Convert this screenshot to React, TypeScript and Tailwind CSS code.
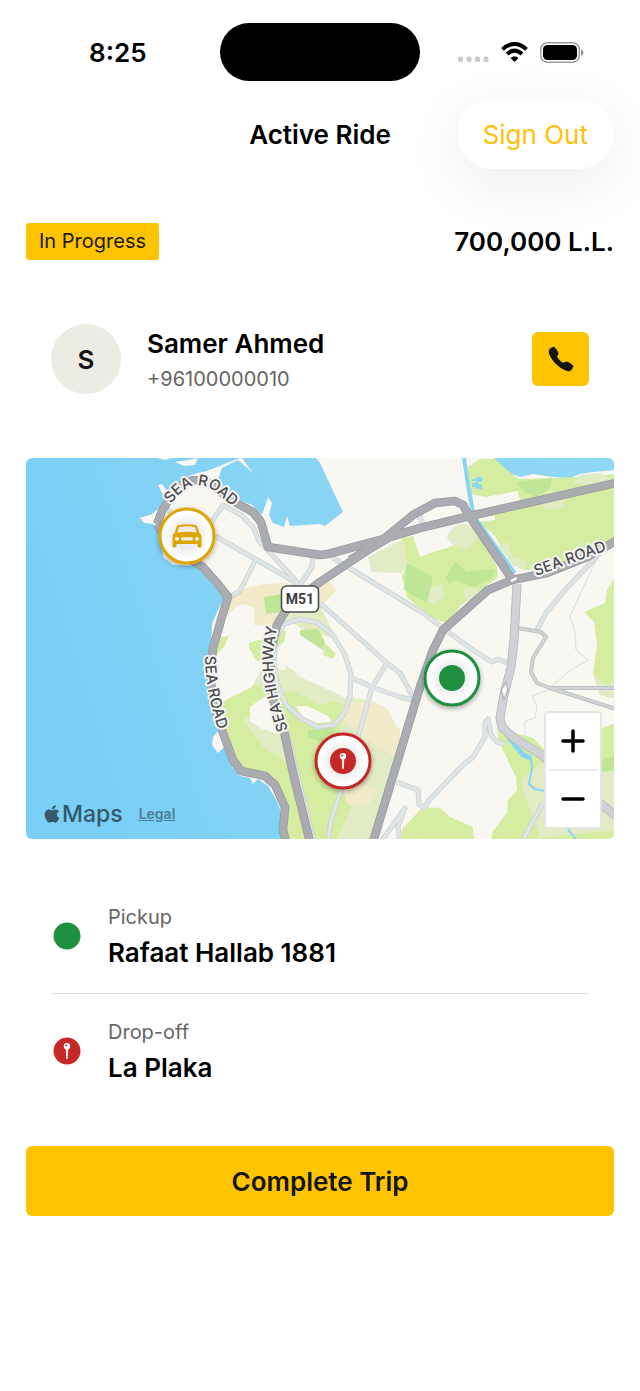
import { ReactNode } from 'react'
import { FaApple } from 'react-icons/fa'
import { IoCall } from 'react-icons/io5'

type MarkerProps = {
  x: number
  y: number
  color: string
  children: ReactNode
}

type StopProps = {
  label: string
  place: string
  icon: ReactNode
}

const majorRoads = [
  'M157 524 L162 511 L171 496 L182 485 L193 480 L206 481 L233 501 L253 512 L261 522 L268 547 L320 555 L328 554 L380 540 L420 528 L470 516 L616 483',
  'M157 524 L172 549 L203 567 L217 583 L228 597 L221 620 L213 648 L210 673 L213 703 L223 733 L233 760 L241 771 L265 776 L275 785 L285 807 L283 830 L286 842',
  'M470 517 L463 505 L455 501 L435 503 L413 515 L380 542 L320 582 L288 607 L277 625 L270 655 L273 700 L283 727 L293 773 L310 842',
  'M350 560 L390 537 L420 528',
  'M468 514 L512 579',
  'M616 541 L587 557 L547 573 L512 580 L488 590 L443 630 L433 650 L420 687 L373 842',
]

const minorRoads = [
  'M167 509 L187 526 L217 537 L257 560 L297 583',
  'M255 561 L240 591 L230 597',
  'M210 524 L223 505 L241 515 L253 527 L259 541 L297 582 L300 596',
  'M313 556 L312 567 L300 585',
  'M333 558 L423 613 L470 648 L492 662 L498 659 L507 663',
  'M320 603 L387 663 L400 673 L413 697',
  'M387 663 L372 687 L363 720 L343 785 L331 820 L328 842',
  'M352 678 L372 687 L400 697 L413 700',
  'M274 660 L276 638 L284 624 L300 619 L318 623 L333 635 L345 655 L351 675 L350 697 L344 714 L334 725 L318 727 L302 719 L286 705 L277 683 Z',
  'M286 728 L300 785 L314 842',
  'M418 515 L424 525',
  'M397 782 L418 790 L419 804 L424 808 L430 799 L463 765 L473 757 L485 737 L485 723 L488 719 L491 735 L497 742 L505 744',
  'M381 842 L405 808 L398 827 L400 842',
  'M543 803 L522 842',
  'M600 553 L565 590 L546 613 L537 630',
]

const lanes = [
  'M518 628 L541 632 L546 637 L533 658 L531 672 L537 683 L550 688 L616 688',
  'M550 688 L616 709',
]

const paleRoads = ['M517 584 L514 640 L511 667 L504 695 L500 718 L502 727 L514 738 L542 755 L560 772 L616 816']

const hairlines = [
  'M598 556 L570 616 L575 632 L576 650 L588 660 L568 672 L550 688',
  'M548 690 L532 696 L537 706 L535 718 L525 721 L525 738',
]

function RoadMap() {
  return (
    <svg viewBox="26 458 588 381" className="block w-full" role="img" aria-label="Map of the trip">
      <defs>
        <linearGradient id="sea" x1="0" x2="1" y1="0.3" y2="0.1">
          <stop offset="0" stopColor="#79cff5" />
          <stop offset="0.45" stopColor="#88d4f4" />
          <stop offset="1" stopColor="#8fd8f5" />
        </linearGradient>
        <radialGradient id="disc">
          <stop offset="0.45" stopColor="#ececec" />
          <stop offset="0.85" stopColor="#ffffff" />
        </radialGradient>
        <filter id="drop" x="-30%" y="-30%" width="160%" height="160%">
          <feDropShadow dx="0" dy="2" stdDeviation="2.5" floodOpacity="0.35" />
        </filter>
        <path id="label-north" d="M171 504 Q180 491 192 486 Q206 483 218 494 L242 514" />
        <path id="label-east" d="M536 576 L616 547" />
        <path id="label-west" d="M205 656 Q205 690 219 732 L228 756" />
        <path id="label-highway" d="M288 730 Q270 680 274 645 L281 606" />
      </defs>

      <rect x="26" y="458" width="588" height="381" fill="url(#sea)" />

      {/* land */}
      <path
        fill="#f8f7f2"
        d="M240 458 L227 463 L207 471 L190 475 L183 482 L173 490 L167 491 L162 484 L158 485 L162 493 L166 498 L159 508 L152 514 L140 518 L144 523 L153 524 L162 537 L163 557 L173 565 L197 566 L213 585 L224 598 L217 612 L212 624 L211 645 L207 660 L205 677 L212 703 L220 729 L213 737 L212 745 L218 753 L224 747 L233 768 L240 776 L250 778 L253 784 L258 779 L268 786 L278 803 L282 817 L280 830 L282 840 L616 840 L616 470 L593 472 L580 474 L570 478 L553 477 L533 474 L520 477 L510 473 L500 467 L494 458 L316 458 L320 463 L343 512 L325 526 L320 524 L290 526 L287 516 L284 527 L273 523 L269 515 L272 503 L268 497 L262 515 L252 505 L233 497 L217 483 L222 468 L238 460 L253 473 L242 458 Z"
      />
      <path fill="#f8f7f2" d="M175 462 L188 460 L198 458 L195 465 L184 466 Z M157 458 L172 458 L165 460 Z" />

      {/* parks, north-east */}
      <g fill="#d4eda1">
        <path d="M468 467 L480 459 L495 459 L507 470 L519 479 L553 478 L580 477 L616 474 L616 545 L567 564 L525 570 L513 565 L494 535 L478 522 L495 520 L495 516 L480 516 L476 510 L520 501 L518 491 L485 497 L472 494 L466 480 Z" />
        <path d="M402 538 L413 536 L420 557 L430 553 L450 547 L463 540 L480 532 L497 567 L498 577 L460 606 L448 624 L430 617 L407 597 L402 577 L407 563 Z" />
        <path d="M616 575 L607 590 L605 603 L584 612 L594 622 L597 645 L593 673 L600 690 L616 699 Z" />
        <path d="M400 840 L402 829 L423 807 L440 808 L450 817 L473 827 L474 840 Z" />
        <path d="M491 840 L493 831 L507 813 L508 800 L517 790 L516 777 L499 742 L497 728 L533 738 L545 750 L616 723 L616 840 Z" />
      </g>
      <g fill="#e1ebc4">
        <path d="M368 557 L402 540 L407 563 L402 573 L372 572 Z" />
        <path d="M447 538 Q452 524 463 524 L476 526 L478 538 L468 549 L455 547 Z" />
        <path d="M430 587 L443 583 L444 597 L434 604 L428 602 Z M463 588 L478 588 L477 600 L466 602 Z" />
        <path d="M572 484 L580 475 L600 473 L614 480 L612 484 Z M540 500 L550 490 L566 498 L562 508 L545 510 Z" />
        <path d="M498 545 L508 542 L512 556 L528 562 L524 570 L513 566 Z" />
        <path d="M593 674 L604 684 L616 683 L616 699 L600 695 Z M520 780 L545 760 L616 760 L616 830 L540 838 Z" />
      </g>
      <g fill="#bfe596">
        <path d="M407 563 L433 577 L427 603 L404 590 Z" />
        <path d="M455 562 L467 572 L495 569 L492 578 L474 587 L455 580 L449 584 L446 577 Z" />
        <path d="M517 482 L552 478 L550 488 L535 497 L522 490 Z M602 760 L616 755 L616 770 L602 772 Z" />
      </g>

      {/* dunes and gardens around the fairground */}
      <path
        fill="#f2ebc9"
        d="M230 597 L240 590 L250 587 L265 584 L283 583 L310 585 L330 582 L337 590 L325 602 L290 625 L280 627 L254 625 L254 608 L245 604 L237 606 L227 616 Z"
      />
      <path fill="#e1ebc4" d="M252 687 L262 668 L290 670 L320 690 L352 697 L373 702 L400 730 L397 765 L385 800 L372 842 L335 842 L340 790 L286 745 Z" />
      <path
        fill="#d4eda1"
        d="M216 650 L221 637 L229 636 L224 647 L216 655 Z M249 643 L258 640 L268 640 L268 655 L258 662 L249 652 Z M276 630 L286 631 L284 642 L276 648 Z"
      />
      <path
        fill="#d4eda1"
        d="M220 703 L242 692 L256 685 L275 690 L300 693 L318 705 L338 700 L345 712 L338 735 L325 760 L342 790 L352 806 L335 842 L282 842 L285 815 L277 790 L262 777 L240 770 L222 733 L214 708 Z"
      />
      <path fill="#e1ebc4" d="M243 720 L248 717 L280 734 L288 762 L264 748 Z" />
      <path fill="#e1ebc4" d="M280 612 L300 603 L318 600 L327 620 L337 640 L300 628 Z M284 665 L320 685 L350 697 L348 706 L300 695 Z" />
      <path fill="#bfe596" d="M264 597 L282 594 L281 612 L266 614 Z M308 730 L335 727 L334 738 L320 742 L308 737 Z" />
      <path fill="#f2ebc9" d="M340 716 L352 702 L373 702 L387 708 L400 733 L397 760 L385 750 L365 740 Z M343 790 L350 780 L377 789 L370 803 L360 808 L348 805 Z" />
      <g fill="#f8f7f2">
        <path d="M222 653 L234 644 L248 646 L260 667 L251 685 L238 692 L220 703 L216 680 Z" />
        <path d="M250 707 L262 698 L268 696 L281 728 L280 734 L262 729 L250 721 Z" />
        <path d="M281 645 L290 635 L300 634 L314 646 L326 656 L340 660 L348 680 L346 698 L320 686 L298 676 L286 662 Z" />
        <path d="M296 706 L308 706 L328 716 L332 722 L316 723 L302 716 Z" />
      </g>
      <path fill="#bfe596" d="M300 630 L318 629 L325 642 L323 650 L314 644 L300 635 Z" />
      <path fill="#d4eda1" d="M324 642 L336 654 L333 659 L323 655 Z" />
      <path fill="#d4eda1" d="M320 707 L330 702 L344 704 L342 714 L334 717 Z" />

      {/* streams */}
      <g fill="none" stroke="#86d5f5">
        <path d="M464 458 L468 485 L473 512" strokeWidth="4" />
        <path d="M476 518 L515 573" strokeWidth="3" />
        <path d="M499 708 L497 722 L508 738 L520 752" strokeWidth="2" />
        <path d="M508 739 L516 746" strokeWidth="3" />
        <path d="M514 744 L523 755 L531 758" strokeWidth="5" />
        <path d="M531 758 L532 768 L529 784 L535 789 L545 791 M567 828 L578 842" strokeWidth="2" />
      </g>
      <path fill="#8fd8f5" d="M472 479 h4 v-2 h6 v5 h-4 v2 h4 v5 h-6 v-2 h-4 v-4 h4 v-2 h-4 Z" />

      <g fill="none" strokeLinejoin="round">
        {hairlines.map((d) => (
          <path key={d} d={d} stroke="#dcdcdc" strokeWidth="1" />
        ))}
        {minorRoads.map((d) => (
          <path key={d} d={d} stroke="#c9d0d0" strokeWidth="5" />
        ))}
        {minorRoads.map((d) => (
          <path key={d} d={d} stroke="#dfe5e6" strokeWidth="3.6" />
        ))}
        {lanes.map((d) => (
          <path key={d} d={d} stroke="#b9bdbf" strokeWidth="4" />
        ))}
        {lanes.map((d) => (
          <path key={d} d={d} stroke="#d0d4d6" strokeWidth="2.4" />
        ))}
        {paleRoads.map((d) => (
          <path key={d} d={d} stroke="#b5b6bb" strokeWidth="9" />
        ))}
        {paleRoads.map((d) => (
          <path key={d} d={d} stroke="#d1d2d7" strokeWidth="7.4" />
        ))}
        <path d="M506 682 L501 690 L504 700 L508 690 Z" fill="#f8f7f2" stroke="#b5b6bb" strokeWidth="1.5" />
        {majorRoads.map((d) => (
          <path key={d} d={d} stroke="#989a9f" strokeWidth="8.6" />
        ))}
        {majorRoads.map((d) => (
          <path key={d} d={d} stroke="#abacb1" strokeWidth="7" />
        ))}
        <path d="M511 581 L517 578" stroke="#ffffff" strokeWidth="2" />
      </g>

      <g
        fill="#4b4c50"
        stroke="#f4f4f2"
        strokeWidth="4"
        strokeLinejoin="round"
        paintOrder="stroke"
        className="font-[Inter] text-[15px] font-medium">
        <text>
          <textPath href="#label-north">SEA ROAD</textPath>
        </text>
        <text>
          <textPath href="#label-east">SEA ROAD</textPath>
        </text>
        <text>
          <textPath href="#label-west">SEA ROAD</textPath>
        </text>
        <text>
          <textPath href="#label-highway">SEA HIGHWAY</textPath>
        </text>
      </g>

      <rect x="281.500" y="586" width="37" height="26" rx="5" fill="#fff" stroke="#4b4c50" strokeWidth="1.6" />
      <text x="300" y="604" textAnchor="middle" fill="#3c3d40" className="font-[Roboto] text-[14px] font-bold">
        M51
      </text>

      <Marker x={187} y={536} color="#dfa500">
        <path
          fill="#dfa500"
          fillRule="evenodd"
          d="M-8.500 -11 Q0 -12.500 8.500 -11 Q9.800 -10.800 10.300 -9.500 L12.300 -3.200 Q14.500 -1.500 14.500 1.500 V10 Q14.500 11.500 13 11.500 H12 Q10.500 11.500 10.500 10 V8 H-10.500 V10 Q-10.500 11.500 -12 11.500 H-13 Q-14.500 11.500 -14.500 10 V1.500 Q-14.500 -1.500 -12.300 -3.200 L-10.300 -9.500 Q-9.800 -10.800 -8.500 -11 Z M-8 -9 L-9.800 -3.500 Q0 -4.800 9.800 -3.500 L8 -9 Q0 -10.500 -8 -9 Z M-4.500 1.200 A1.500 1.500 0 0 0 -4.500 4.400 H4.500 A1.500 1.500 0 0 0 4.500 1.200 Z"
        />
        <circle cx="-10" cy="2.800" r="1.900" fill="#fff" />
        <circle cx="10" cy="2.800" r="1.900" fill="#fff" />
      </Marker>
      <Marker x={452} y={678} color="#1f8f40">
        <circle r="13" fill="#1f8f40" />
      </Marker>
      <Marker x={343} y={761} color="#c62828">
        <circle r="13" fill="#c62828" />
        <PinGlyph />
      </Marker>
    </svg>
  )
}

function Marker({ x, y, color, children }: MarkerProps) {
  return (
    <g transform={`translate(${x} ${y})`}>
      <circle r="27" fill="url(#disc)" stroke={color} strokeWidth="3" filter="url(#drop)" />
      {children}
    </g>
  )
}

function PinGlyph() {
  return (
    <>
      <path d="M-1.200 -2 H1.200 L0.900 7.500 Q0 9 -0.900 7.500 Z" fill="#f3e3e3" />
      <circle cy="-4.800" r="3.200" fill="#fff" />
      <circle cx="-0.800" cy="-5.400" r="1" fill="#c62828" />
    </>
  )
}

function StatusBar() {
  return (
    <div className="grid grid-cols-[1fr_200px_1fr] items-center pt-[23px]">
      <span className="pl-[89px] text-[26px] font-semibold">8:25</span>
      <div className="h-[58px] rounded-full bg-black" />
      <div className="flex items-center justify-end gap-3 pr-14">
        <svg width="31" height="20" viewBox="0 0 31 20" fill="#cbcbcb">
          <rect x="0" y="14.500" width="5" height="5.500" rx="1.800" />
          <rect x="8.500" y="14.500" width="5" height="5.500" rx="1.800" />
          <rect x="17" y="14.500" width="5" height="5.500" rx="1.800" />
          <rect x="25.500" y="14.500" width="5" height="5.500" rx="1.800" />
        </svg>
        <svg width="27" height="20" viewBox="0 0 27 20" fill="none" stroke="#000" strokeWidth="3.900">
          <path d="M1.500 7.400 Q13.500 -3.500 25.500 7.400" />
          <path d="M6 12 Q13.500 5.300 21 12" />
          <path d="M13.500 20 L9.500 15.900 Q13.500 12.600 17.500 15.900 Z" fill="#000" stroke="none" />
        </svg>
        <svg width="44" height="21" viewBox="0 0 44 21">
          <rect x="0.800" y="0.800" width="38.400" height="19.400" rx="6.500" fill="none" stroke="#9b9b9b" strokeWidth="1.500" />
          <rect x="3" y="3" width="34" height="15" rx="4.500" />
          <path d="M41 7 Q43.500 8 43.500 10.500 Q43.500 13 41 14 Z" fill="#9b9b9b" />
        </svg>
      </div>
    </div>
  )
}

function Stop({ label, place, icon }: StopProps) {
  return (
    <li className="flex items-center gap-[27px] py-6">
      <svg width="28" height="28" viewBox="-14 -14 28 28" className="ml-0.5 shrink-0">
        {icon}
      </svg>
      <div>
        <p className="text-xl leading-7 text-[#666662]">{label}</p>
        <p className="mt-1.5 text-[26px] leading-8 font-semibold">{place}</p>
      </div>
    </li>
  )
}

export default function App() {
  return (
    <div className="min-h-screen overflow-x-hidden bg-white font-[Inter,sans-serif] text-black">
      <StatusBar />

      <header className="mt-[18px] grid grid-cols-[1fr_auto_1fr] items-center px-[26px]">
        <h1 className="col-start-2 text-[26px] font-semibold">Active Ride</h1>
        <button className="h-[70px] justify-self-end rounded-full bg-white px-[26px] text-[26px] text-[#ffc107] shadow-[0_16px_60px_rgba(0,0,0,0.08)]">
          Sign Out
        </button>
      </header>

      <main className="px-[26px] pt-[54px] pb-12">
        <div className="flex h-[37px] items-center justify-between">
          <span className="rounded-[3px] bg-[#ffc400] px-[13px] py-1 text-xl leading-[29px] text-[#1a1a1a]">
            In Progress
          </span>
          <span className="text-[26px] font-semibold">700,000 L.L.</span>
        </div>

        <section className="mt-16 flex items-center px-[25px]">
          <div className="flex size-[70px] items-center justify-center rounded-full bg-[#ecece5] text-[26px] font-semibold text-[#141414]">
            S
          </div>
          <div className="ml-[26px]">
            <h2 className="text-[26px] leading-10 font-semibold">Samer Ahmed</h2>
            <p className="text-xl leading-[30px] text-[#666662]">+96100000010</p>
          </div>
          <button
            aria-label="Call passenger"
            className="ml-auto flex h-[54px] w-[57px] items-center justify-center rounded-md bg-[#ffc400] text-[#141414]">
            <IoCall size={28} />
          </button>
        </section>

        <section className="relative mt-16 overflow-hidden rounded-md">
          <RoadMap />
          <div className="absolute bottom-2 left-4 flex items-center text-[#34596a]">
            <FaApple size={20} />
            <span className="text-[23px] font-medium">Maps</span>
            <a href="#legal" className="ml-4 text-sm font-semibold text-[#4c7f93] underline">
              Legal
            </a>
          </div>
          <div className="absolute right-3 bottom-2.5 flex w-[58px] flex-col rounded-sm border-2 border-[#e6e6e1] bg-white">
            <button aria-label="Zoom in" className="flex h-14 items-center justify-center">
              <svg width="24" height="24" stroke="#000" strokeWidth="3.500" strokeLinecap="round">
                <path d="M2 12 H22 M12 2 V22" />
              </svg>
            </button>
            <div className="mx-0.5 h-0.5 bg-[#ececec]" />
            <button aria-label="Zoom out" className="flex h-14 items-center justify-center">
              <svg width="24" height="24" stroke="#000" strokeWidth="3.500" strokeLinecap="round">
                <path d="M2 12 H22" />
              </svg>
            </button>
          </div>
        </section>

        <ul className="mt-10 divide-y divide-[#e2e2e2] px-[25px]">
          <Stop label="Pickup" place="Rafaat Hallab 1881" icon={<circle r="13.500" fill="#1f8f40" />} />
          <Stop
            label="Drop-off"
            place="La Plaka"
            icon={
              <>
                <circle r="13.500" fill="#c62828" />
                <PinGlyph />
              </>
            }
          />
        </ul>

        <button className="mt-[38px] h-[70px] w-full rounded-md bg-[#ffc400] text-[26px] font-semibold text-[#141414]">
          Complete Trip
        </button>
      </main>
    </div>
  )
}
